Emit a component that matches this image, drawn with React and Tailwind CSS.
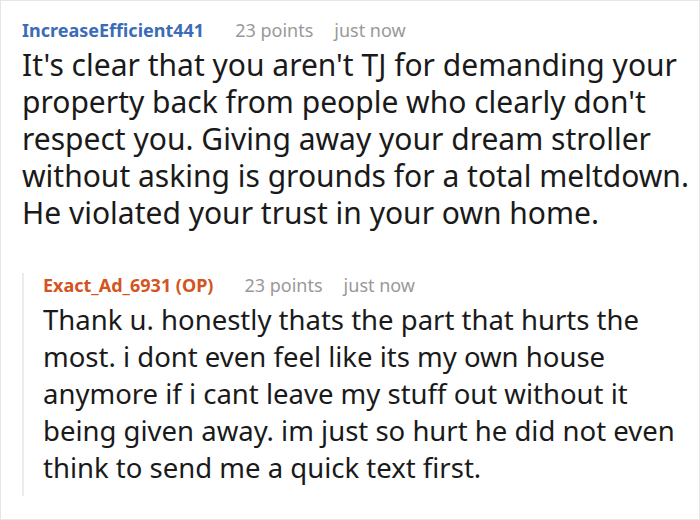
import React from 'react';

const font = { fontFamily: '"Noto Sans", "Open Sans", sans-serif' };

const Header = ({ name, color }) => (
  <div className="flex items-center h-[24px] text-[18px] leading-[24px]">
    <span className={`font-bold ${color}`}>{name}</span>
    <span className="ml-[31px] text-[#999999]">23 points</span>
    <span className="ml-[21px] text-[#999999]">just now</span>
  </div>
);

export default function App() {
  return (
    <div
      className="w-[700px] h-[520px] bg-white border border-[#e6e6e6] pl-[21px] pr-[6px] pt-[17px] text-[#1a1a1a]"
      style={font}
    >
      <Header name="IncreaseEfficient441" color="text-[#3c6bb8]" />
      <p className="mt-[4px] text-[30px] leading-[37px]">
        It's clear that you aren't TJ for demanding your property back from people who clearly don't
        respect you. Giving away your dream stroller without asking is grounds for a total meltdown.
        He violated your trust in your own home.
      </p>
      <div className="mt-[42px] border-l-2 border-[#ececec] pl-[19px] pb-[10px]">
        <Header name="Exact_Ad_6931 (OP)" color="text-[#d4541f]" />
        <p className="mt-[4px] text-[27.5px] leading-[37px]">
          Thank u. honestly thats the part that hurts the most. i dont even feel like its my own
          house anymore if i cant leave my stuff out without it being given away. im just so hurt
          he did not even think to send me a quick text first.
        </p>
      </div>
    </div>
  );
}
